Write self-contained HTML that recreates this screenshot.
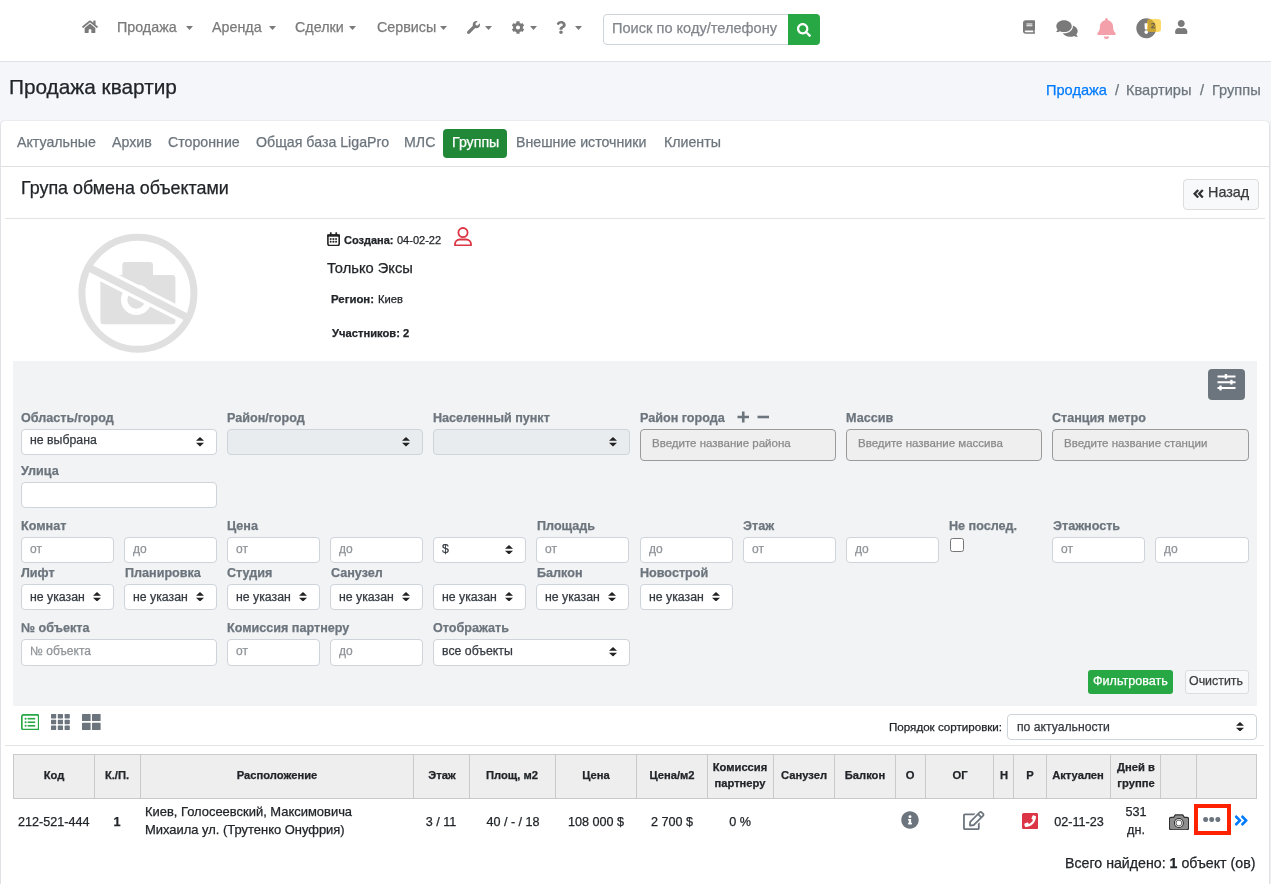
<!DOCTYPE html>
<html><head><meta charset="utf-8"><title>Продажа квартир</title>
<style>
html,body{margin:0;padding:0;}
body{width:1271px;height:884px;overflow:hidden;position:relative;background:#f4f6f9;font-family:"Liberation Sans",sans-serif;color:#212529;}
.t{position:absolute;white-space:nowrap;line-height:1;will-change:transform;-webkit-text-stroke:0.25px currentColor;}
.b{position:absolute;box-sizing:border-box;}
.inp{position:absolute;box-sizing:border-box;background:#fff;border:1px solid #ced4da;border-radius:4px;}
</style></head><body>

<div class="b" style="left:0px;top:0px;width:1271px;height:62px;background:#fff;border-bottom:1px solid #dee2e6;"></div>
<svg class="b" style="left:81.5px;top:20px;" width="16" height="13" viewBox="0 0 576 460"><path fill="#7a7a7a" d="M280.4 148.3L96 300.1V464a16 16 0 0 0 16 16l112.1-.3a16 16 0 0 0 15.9-16V368a16 16 0 0 1 16-16h64a16 16 0 0 1 16 16v95.6a16 16 0 0 0 16 16.1l112 .3a16 16 0 0 0 16-16V300L295.7 148.3a12.2 12.2 0 0 0-15.3 0zM571.6 251.5L488 182.6V44.1a12 12 0 0 0-12-12h-56a12 12 0 0 0-12 12v72.6L318.5 43a48 48 0 0 0-61 0L4.3 251.5a12 12 0 0 0-1.6 16.9l25.5 31A12 12 0 0 0 45.2 301l235.2-193.7a12.2 12.2 0 0 1 15.3 0L530.9 301a12 12 0 0 0 16.9-1.6l25.5-31a12 12 0 0 0-1.7-16.9z" transform="translate(0,-20)"/></svg>
<div class="t " style="left:116.50px;top:19.89px;font-size:14.3px;color:#7a7a7a;">Продажа</div>
<svg class="b" style="left:185.5px;top:26px;" width="7" height="4" viewBox="0 0 7 4"><path d="M0 0H7L3.5 4Z" fill="#7a7a7a"/></svg>
<div class="t " style="left:211.50px;top:19.89px;font-size:14.3px;color:#7a7a7a;">Аренда</div>
<svg class="b" style="left:268.5px;top:26px;" width="7" height="4" viewBox="0 0 7 4"><path d="M0 0H7L3.5 4Z" fill="#7a7a7a"/></svg>
<div class="t " style="left:295.00px;top:19.89px;font-size:14.3px;color:#7a7a7a;">Сделки</div>
<svg class="b" style="left:348.5px;top:26px;" width="7" height="4" viewBox="0 0 7 4"><path d="M0 0H7L3.5 4Z" fill="#7a7a7a"/></svg>
<div class="t " style="left:376.50px;top:19.89px;font-size:14.3px;color:#7a7a7a;">Сервисы</div>
<svg class="b" style="left:439.5px;top:26px;" width="7" height="4" viewBox="0 0 7 4"><path d="M0 0H7L3.5 4Z" fill="#7a7a7a"/></svg>
<svg class="b" style="left:465.5px;top:20.5px;" width="15" height="13" viewBox="0 0 512 512"><path fill="#7a7a7a" d="M507.73 109.1c-2.24-9.03-13.54-12.09-20.12-5.51l-74.36 74.36-67.88-11.31-11.31-67.88 74.36-74.36c6.62-6.62 3.43-17.9-5.66-20.16-47.38-11.74-99.55.91-136.58 37.93-39.64 39.64-50.55 97.1-34.05 147.2L18.74 402.76c-24.99 24.99-24.99 65.51 0 90.5 24.99 24.99 65.51 24.99 90.5 0l213.21-213.21c50.12 16.71 107.47 5.68 147.37-34.22 37.07-37.07 49.7-89.32 37.91-136.73z"/></svg>
<svg class="b" style="left:484.5px;top:26px;" width="7" height="4" viewBox="0 0 7 4"><path d="M0 0H7L3.5 4Z" fill="#7a7a7a"/></svg>
<svg class="b" style="left:510.5px;top:20.5px;" width="14" height="13" viewBox="0 0 512 512"><path fill="#7a7a7a" d="M487.4 315.7l-42.6-24.6c4.3-23.2 4.3-47 0-70.2l42.6-24.6c4.9-2.8 7.1-8.6 5.5-14-11.1-35.6-30-67.8-54.7-94.6-3.8-4.1-10-5.1-14.8-2.3L380.8 110c-17.9-15.4-38.5-27.3-60.8-35.1V25.8c0-5.6-3.9-10.5-9.4-11.7-36.7-8.2-74.3-7.8-109.2 0-5.5 1.2-9.4 6.1-9.4 11.7V75c-22.2 7.9-42.8 19.8-60.8 35.1L88.7 85.5c-4.9-2.8-11-1.9-14.8 2.3-24.7 26.7-43.6 58.9-54.7 94.6-1.7 5.4.6 11.2 5.5 14L67.3 221c-4.3 23.2-4.3 47 0 70.2l-42.6 24.6c-4.9 2.8-7.1 8.6-5.5 14 11.1 35.6 30 67.8 54.7 94.6 3.8 4.1 10 5.1 14.8 2.3l42.6-24.6c17.9 15.4 38.5 27.3 60.8 35.1v49.2c0 5.6 3.9 10.5 9.4 11.7 36.7 8.2 74.3 7.8 109.2 0 5.5-1.2 9.4-6.1 9.4-11.7v-49.2c22.2-7.9 42.8-19.8 60.8-35.1l42.6 24.6c4.9 2.8 11 1.9 14.8-2.3 24.7-26.7 43.6-58.9 54.7-94.6 1.5-5.5-.7-11.3-5.6-14.1zM256 336c-44.1 0-80-35.9-80-80s35.9-80 80-80 80 35.9 80 80-35.9 80-80 80z"/></svg>
<svg class="b" style="left:529.5px;top:26px;" width="7" height="4" viewBox="0 0 7 4"><path d="M0 0H7L3.5 4Z" fill="#7a7a7a"/></svg>
<svg class="b" style="left:556px;top:20.5px;" width="10" height="13" viewBox="0 0 384 512"><path fill="#7a7a7a" d="M202.021 0C122.202 0 70.503 32.703 29.914 91.026c-7.363 10.58-5.093 25.086 5.178 32.874l43.138 32.709c10.373 7.865 25.132 6.026 33.253-4.148 25.049-31.381 43.63-49.449 82.757-49.449 30.764 0 68.816 19.799 68.816 49.631 0 22.552-18.617 34.134-48.993 51.164-35.423 19.86-82.299 44.576-82.299 106.405V320c0 13.255 10.745 24 24 24h72.471c13.255 0 24-10.745 24-24v-5.773c0-42.86 125.268-44.645 125.268-160.627C377.504 66.256 286.902 0 202.021 0zM192 373.459c-38.196 0-69.271 31.075-69.271 69.271 0 38.195 31.075 69.27 69.271 69.27s69.271-31.075 69.271-69.271-31.075-69.27-69.271-69.27z"/></svg>
<svg class="b" style="left:574.5px;top:26px;" width="7" height="4" viewBox="0 0 7 4"><path d="M0 0H7L3.5 4Z" fill="#7a7a7a"/></svg>
<div class="inp" style="left:603px;top:14px;width:186px;height:31px;border-color:#ced4da;border-radius:4px 0 0 4px;"></div>
<div class="t " style="left:612.00px;top:20.94px;font-size:14.6px;color:#80868c;">Поиск по коду/телефону</div>
<div class="b" style="left:788px;top:14px;width:32px;height:31px;background:#28a745;border-radius:0 4px 4px 0;"></div>
<svg class="b" style="left:797px;top:23px;" width="14" height="14" viewBox="0 0 512 512"><path fill="#fff" d="M505 442.7L405.3 343c-4.5-4.5-10.6-7-17-7H372c27.6-35.3 44-79.7 44-128C416 93.1 322.9 0 208 0S0 93.1 0 208s93.1 208 208 208c48.3 0 92.7-16.4 128-44v16.3c0 6.4 2.5 12.5 7 17l99.7 99.7c9.4 9.4 24.6 9.4 33.9 0l28.3-28.3c9.4-9.4 9.4-24.6.1-34zM208 336c-70.7 0-128-57.2-128-128 0-70.7 57.2-128 128-128 70.7 0 128 57.2 128 128 0 70.7-57.2 128-128 128z"/></svg>
<svg class="b" style="left:1023px;top:19.5px;" width="12" height="14" viewBox="0 0 448 512"><path fill="#7a7a7a" d="M448 360V24c0-13.3-10.7-24-24-24H96C43 0 0 43 0 96v320c0 53 43 96 96 96h328c13.3 0 24-10.7 24-24v-16c0-7.5-3.5-14.3-8.9-18.7-4.2-15.4-4.2-59.3 0-74.7 5.4-4.3 8.9-11.1 8.9-18.6zM128 134c0-3.3 2.7-6 6-6h212c3.3 0 6 2.7 6 6v20c0 3.3-2.7 6-6 6H134c-3.3 0-6-2.7-6-6v-20zm0 64c0-3.3 2.7-6 6-6h212c3.3 0 6 2.7 6 6v20c0 3.3-2.7 6-6 6H134c-3.3 0-6-2.7-6-6v-20zm253.4 250H96c-17.7 0-32-14.3-32-32 0-17.6 14.4-32 32-32h285.4c-1.9 17.1-1.9 46.9 0 64z"/></svg>
<svg class="b" style="left:1054.5px;top:18.5px;" width="24" height="19" viewBox="0 0 576 512"><path fill="#7a7a7a" d="M416 192c0-88.4-93.1-160-208-160S0 103.6 0 192c0 34.3 14.1 65.9 38 92-13.4 30.2-35.5 54.2-35.8 54.5-2.2 2.3-2.8 5.7-1.5 8.7S4.8 352 8 352c36.6 0 66.9-12.3 88.7-25 32.2 15.7 70.3 25 111.3 25 114.9 0 208-71.6 208-160zm122 220c23.9-26 38-57.7 38-92 0-66.9-53.5-124.2-129.3-148.1.9 6.6 1.3 13.3 1.3 20.1 0 105.9-107.7 192-240 192-10.8 0-21.3-.8-31.7-1.9C207.8 439.6 281.8 480 368 480c41 0 79.1-9.2 111.3-25 21.8 12.7 52.1 25 88.7 25 3.2 0 6.1-1.9 7.3-4.8 1.3-2.9.7-6.3-1.5-8.7-.3-.3-22.4-24.2-35.8-54.5z"/></svg>
<svg class="b" style="left:1097px;top:17.5px;" width="19" height="21" viewBox="0 0 448 512"><path fill="#f3a0aa" d="M224 512c35.32 0 63.97-28.65 63.97-64H160.03c0 35.35 28.65 64 63.97 64zm215.39-149.71c-19.32-20.76-55.47-51.99-55.47-154.29 0-77.7-54.48-139.9-127.94-155.16V32c0-17.67-14.32-32-31.98-32s-31.98 14.33-31.98 32v20.84C118.56 68.1 64.08 130.3 64.08 208c0 102.3-36.15 133.53-55.47 154.29-6 6.45-8.66 14.16-8.61 21.71.11 16.4 12.98 32 32.1 32h383.8c19.12 0 32-15.6 32.1-32 .05-7.55-2.61-15.27-8.61-21.71z"/></svg>
<svg class="b" style="left:1135.5px;top:18px;" width="20.5" height="20.5" viewBox="0 0 512 512"><path fill="#7a7a7a" d="M504 256c0 136.997-111.043 248-248 248S8 392.997 8 256C8 119.083 119.043 8 256 8s248 111.083 248 248zm-248 50c-25.405 0-46 20.595-46 46s20.595 46 46 46 46-20.595 46-46-20.595-46-46-46zm-43.673-165.346l7.418 136c.347 6.364 5.609 11.346 11.982 11.346h48.546c6.373 0 11.635-4.982 11.982-11.346l7.418-136c.375-6.874-5.098-12.654-11.982-12.654h-63.383c-6.884 0-12.356 5.78-11.981 12.654z"/></svg>
<div class="b" style="left:1147px;top:19px;width:14px;height:13px;background:rgba(255,193,7,.6);border-radius:3px;"></div>
<div class="t " style="left:1151.00px;top:22.15px;font-size:7.5px;color:#555;">2</div>
<svg class="b" style="left:1175px;top:19.5px;" width="12.5" height="14" viewBox="0 0 448 512"><path fill="#7a7a7a" d="M224 256c70.7 0 128-57.3 128-128S294.7 0 224 0 96 57.3 96 128s57.3 128 128 128zm89.6 32h-16.7c-22.2 10.2-46.9 16-72.9 16s-50.6-5.8-72.9-16h-16.7C60.2 288 0 348.2 0 422.4V464c0 26.5 21.5 48 48 48h352c26.5 0 48-21.5 48-48v-41.6c0-74.2-60.2-134.4-134.4-134.4z"/></svg>
<div class="t " style="left:8.50px;top:77.19px;font-size:20.8px;color:#212529;">Продажа квартир</div>
<div class="t " style="left:1046.20px;top:82.84px;font-size:14.6px;color:#007bff;">Продажа</div>
<div class="t " style="left:1115.00px;top:82.84px;font-size:14.6px;color:#6c757d;">/</div>
<div class="t " style="left:1126.40px;top:82.84px;font-size:14.6px;color:#6c757d;">Квартиры</div>
<div class="t " style="left:1200.30px;top:82.84px;font-size:14.6px;color:#6c757d;">/</div>
<div class="t " style="left:1211.80px;top:82.84px;font-size:14.6px;color:#6c757d;">Группы</div>
<div class="b" style="left:1px;top:121px;width:1268px;height:779px;background:#fff;border-radius:4px;box-shadow:0 0 1px rgba(0,0,0,.125),0 1px 3px rgba(0,0,0,.2);"></div>
<div class="t " style="left:16.50px;top:134.58px;font-size:14.2px;color:#6c757d;">Актуальные</div>
<div class="t " style="left:112.00px;top:134.58px;font-size:14.2px;color:#6c757d;">Архив</div>
<div class="t " style="left:168.00px;top:134.58px;font-size:14.2px;color:#6c757d;">Сторонние</div>
<div class="t " style="left:256.00px;top:134.58px;font-size:14.2px;color:#6c757d;">Общая база LigaPro</div>
<div class="t " style="left:404.00px;top:134.58px;font-size:14.2px;color:#6c757d;">МЛС</div>
<div class="b" style="left:443px;top:129px;width:64px;height:29px;background:#218838;border-radius:4px;"></div>
<div class="t " style="left:451.50px;top:134.58px;font-size:14.2px;color:#fff;">Группы</div>
<div class="t " style="left:515.50px;top:134.58px;font-size:14.2px;color:#6c757d;">Внешние источники</div>
<div class="t " style="left:664.00px;top:134.58px;font-size:14.2px;color:#6c757d;">Клиенты</div>
<div class="b" style="left:1px;top:166px;width:1268px;height:1px;background:rgba(0,0,0,.125);"></div>
<div class="t " style="left:20.50px;top:179.64px;font-size:17.9px;color:#212529;">Група обмена объектами</div>
<div class="b" style="left:1183px;top:179px;width:76px;height:31px;background:#f8f9fa;border:1px solid #ddd;border-radius:4px;"></div>
<svg class="b" style="left:1193px;top:188.5px;" width="11" height="9.5" viewBox="0 0 11 9.5"><path d="M5.2 1L1.6 4.75L5.2 8.5M9.8 1L6.2 4.75L9.8 8.5" fill="none" stroke="#333" stroke-width="2.3"/></svg>
<div class="t " style="left:1208.00px;top:185.21px;font-size:14.4px;color:#3a3a3a;">Назад</div>
<div class="b" style="left:5px;top:218px;width:1260px;height:1px;background:#e3e3e3;"></div>
<svg class="b" style="left:76px;top:232px;" width="124" height="124" viewBox="0 0 124 124">
<defs><clipPath id="ic"><circle cx="61.9" cy="61.3" r="52.6"/></clipPath><clipPath id="oc"><circle cx="61.9" cy="61.3" r="59"/></clipPath></defs>
<circle cx="61.9" cy="61.3" r="56" fill="none" stroke="#e0e0e0" stroke-width="7"/>
<path fill="#e0e0e0" d="M49.3 30h24.7a3 3 0 0 1 3 3v10h19.4a3 3 0 0 1 3 3v43.3a3 3 0 0 1-3 3h-69a3 3 0 0 1-3-3V46a3 3 0 0 1 3-3h18.9V33a3 3 0 0 1 3-3z"/>
<circle cx="60.3" cy="67.7" r="15.3" fill="#fff"/>
<circle cx="60.3" cy="67.7" r="9" fill="#e0e0e0"/>
<path d="M8.4 33.3L115.4 87.7" stroke="#fff" stroke-width="14" clip-path="url(#ic)"/>
<path d="M8.4 33.3L115.4 87.7" stroke="#e0e0e0" stroke-width="7.6" clip-path="url(#oc)"/>
</svg>
<svg class="b" style="left:327px;top:231.5px;" width="13" height="14.5" viewBox="0 0 13 14.5"><rect x="0.9" y="3" width="11.3" height="10.6" rx="1.8" fill="none" stroke="#222" stroke-width="1.6"/><rect x="0.2" y="2.3" width="12.7" height="2.4" fill="#222"/><rect x="2.9" y="0.3" width="1.7" height="3" fill="#222"/><rect x="8.4" y="0.3" width="1.7" height="3" fill="#222"/><g fill="#222"><rect x="2.8" y="6.2" width="1.6" height="1.6"/><rect x="5.6" y="6.2" width="1.6" height="1.6"/><rect x="8.3" y="6.2" width="1.6" height="1.6"/><rect x="2.8" y="9" width="1.6" height="1.6"/><rect x="5.6" y="9" width="1.6" height="1.6"/><rect x="8.3" y="9" width="1.6" height="1.6"/></g><path d="M3.6 7v2.8M6.4 7v2.8M9.1 7v2.8M3.6 7h5.5M3.6 9.8h5.5" stroke="#222" stroke-width="0.6" opacity=".5"/></svg>
<div class="t " style="left:343.50px;top:234.69px;font-size:11px;font-weight:700;color:#212529;">Создана:</div>
<div class="t " style="left:397.00px;top:234.69px;font-size:11px;color:#212529;">04-02-22</div>
<svg class="b" style="left:454px;top:226.5px;" width="18" height="19.5" viewBox="0 0 18 19.5"><circle cx="9" cy="5.6" r="4.6" fill="none" stroke="#dc3545" stroke-width="1.8"/><path d="M1 18.5v-1.3c0-2.6 2.1-4.7 4.7-4.7h6.6c2.6 0 4.7 2.1 4.7 4.7v1.3z" fill="none" stroke="#dc3545" stroke-width="1.8" stroke-linejoin="round"/></svg>
<div class="t " style="left:327.30px;top:260.55px;font-size:14.7px;color:#212529;">Только Эксы</div>
<div class="t " style="left:331.30px;top:294.25px;font-size:11.4px;font-weight:700;color:#212529;">Регион:</div>
<div class="t " style="left:377.60px;top:294.42px;font-size:11.2px;color:#212529;">Киев</div>
<div class="t " style="left:331.60px;top:327.52px;font-size:11.2px;font-weight:700;color:#212529;">Участников: 2</div>
<div class="b" style="left:13px;top:361px;width:1244px;height:345px;background:#f2f3f5;"></div>
<div class="b" style="left:1208px;top:369px;width:37px;height:31px;background:#6c757d;border-radius:4px;"></div>
<svg class="b" style="left:1216.5px;top:374px;" width="19" height="16.5" viewBox="0 0 19 16.5"><g stroke="#fff" stroke-width="2"><path d="M0.5 2.4H18.5M0.5 8.2H18.5M0.5 14H18.5"/></g><g fill="#fff"><rect x="7.7" y="0" width="2.4" height="4.8" rx=".6"/><rect x="13.2" y="5.8" width="2.4" height="4.8" rx=".6"/><rect x="2.3" y="11.6" width="2.4" height="4.8" rx=".6"/></g></svg>
<div class="t " style="left:20.80px;top:412.03px;font-size:12.6px;font-weight:700;color:#6c757d;">Область/город</div>
<div class="t " style="left:227.30px;top:412.03px;font-size:12.6px;font-weight:700;color:#6c757d;">Район/город</div>
<div class="t " style="left:433.30px;top:412.03px;font-size:12.6px;font-weight:700;color:#6c757d;">Населенный пункт</div>
<div class="t " style="left:640.00px;top:412.03px;font-size:12.6px;font-weight:700;color:#6c757d;">Район города</div>
<div class="t " style="left:846.00px;top:412.03px;font-size:12.6px;font-weight:700;color:#6c757d;">Массив</div>
<div class="t " style="left:1052.40px;top:412.03px;font-size:12.6px;font-weight:700;color:#6c757d;">Станция метро</div>
<svg class="b" style="left:737px;top:411px;" width="12.5" height="12" viewBox="0 0 12.5 12"><path d="M6.25 0.5V11.5M0.5 6H12" stroke="#6c757d" stroke-width="2.6"/></svg>
<svg class="b" style="left:757px;top:411px;" width="12.5" height="12" viewBox="0 0 12.5 12"><path d="M0.5 6H12" stroke="#6c757d" stroke-width="2.6"/></svg>
<div class="inp" style="left:21px;top:429px;width:196px;height:26px;background:#fff;"></div>
<div class="t " style="left:29.70px;top:434.29px;font-size:12.3px;color:#343a40;">не выбрана</div>
<svg class="b" style="left:196px;top:437.2px;" width="8" height="9.5" viewBox="0 0 8 9.5"><path d="M4 0L8 3.8H0Z M0 5.7H8L4 9.5Z" fill="#222"/></svg>
<div class="inp" style="left:227px;top:429px;width:195.5px;height:26px;background:#e9ecef;"></div>
<svg class="b" style="left:401.5px;top:437.2px;" width="8" height="9.5" viewBox="0 0 8 9.5"><path d="M4 0L8 3.8H0Z M0 5.7H8L4 9.5Z" fill="#222"/></svg>
<div class="inp" style="left:433px;top:429px;width:196.5px;height:26px;background:#e9ecef;"></div>
<svg class="b" style="left:608.5px;top:437.2px;" width="8" height="9.5" viewBox="0 0 8 9.5"><path d="M4 0L8 3.8H0Z M0 5.7H8L4 9.5Z" fill="#222"/></svg>
<div class="inp" style="left:640px;top:429px;width:196px;height:31.5px;background:#efefef;border-color:#9a9a9a;border-radius:4px;"></div>
<div class="t " style="left:651.50px;top:437.96px;font-size:11.5px;color:#8a8a8a;">Введите название района</div>
<div class="inp" style="left:846px;top:429px;width:196px;height:31.5px;background:#efefef;border-color:#9a9a9a;border-radius:4px;"></div>
<div class="t " style="left:857.50px;top:437.96px;font-size:11.5px;color:#8a8a8a;">Введите название массива</div>
<div class="inp" style="left:1052px;top:429px;width:196.5px;height:31.5px;background:#efefef;border-color:#9a9a9a;border-radius:4px;"></div>
<div class="t " style="left:1063.50px;top:437.96px;font-size:11.5px;color:#8a8a8a;">Введите название станции</div>
<div class="t " style="left:20.80px;top:464.73px;font-size:12.6px;font-weight:700;color:#6c757d;">Улица</div>
<div class="inp" style="left:21px;top:482px;width:196px;height:26px;background:#fff;border-color:#ced4da;"></div>
<div class="t " style="left:21.00px;top:520.13px;font-size:12.6px;font-weight:700;color:#6c757d;">Комнат</div>
<div class="t " style="left:227.30px;top:520.13px;font-size:12.6px;font-weight:700;color:#6c757d;">Цена</div>
<div class="t " style="left:536.50px;top:520.13px;font-size:12.6px;font-weight:700;color:#6c757d;">Площадь</div>
<div class="t " style="left:742.80px;top:520.13px;font-size:12.6px;font-weight:700;color:#6c757d;">Этаж</div>
<div class="t " style="left:949.30px;top:520.13px;font-size:12.6px;font-weight:700;color:#6c757d;">Не послед.</div>
<div class="t " style="left:1052.70px;top:520.13px;font-size:12.6px;font-weight:700;color:#6c757d;">Этажность</div>
<div class="inp" style="left:21px;top:537px;width:93px;height:25.5px;background:#fff;border-color:#ced4da;"></div>
<div class="t " style="left:29.50px;top:543.04px;font-size:12px;color:#8e9398;">от</div>
<div class="inp" style="left:124px;top:537px;width:93px;height:25.5px;background:#fff;border-color:#ced4da;"></div>
<div class="t " style="left:132.50px;top:543.04px;font-size:12px;color:#8e9398;">до</div>
<div class="inp" style="left:227px;top:537px;width:93px;height:25.5px;background:#fff;border-color:#ced4da;"></div>
<div class="t " style="left:235.50px;top:543.04px;font-size:12px;color:#8e9398;">от</div>
<div class="inp" style="left:330px;top:537px;width:93px;height:25.5px;background:#fff;border-color:#ced4da;"></div>
<div class="t " style="left:338.50px;top:543.04px;font-size:12px;color:#8e9398;">до</div>
<div class="inp" style="left:433px;top:537px;width:93px;height:25.5px;background:#fff;"></div>
<div class="t " style="left:441.70px;top:542.79px;font-size:12.3px;color:#343a40;">$</div>
<svg class="b" style="left:505px;top:544.95px;" width="8" height="9.5" viewBox="0 0 8 9.5"><path d="M4 0L8 3.8H0Z M0 5.7H8L4 9.5Z" fill="#222"/></svg>
<div class="inp" style="left:536px;top:537px;width:93px;height:25.5px;background:#fff;border-color:#ced4da;"></div>
<div class="t " style="left:544.50px;top:543.04px;font-size:12px;color:#8e9398;">от</div>
<div class="inp" style="left:640px;top:537px;width:93px;height:25.5px;background:#fff;border-color:#ced4da;"></div>
<div class="t " style="left:648.50px;top:543.04px;font-size:12px;color:#8e9398;">до</div>
<div class="inp" style="left:743px;top:537px;width:93px;height:25.5px;background:#fff;border-color:#ced4da;"></div>
<div class="t " style="left:751.50px;top:543.04px;font-size:12px;color:#8e9398;">от</div>
<div class="inp" style="left:846px;top:537px;width:93px;height:25.5px;background:#fff;border-color:#ced4da;"></div>
<div class="t " style="left:854.50px;top:543.04px;font-size:12px;color:#8e9398;">до</div>
<div class="inp" style="left:1052px;top:537px;width:93px;height:25.5px;background:#fff;border-color:#ced4da;"></div>
<div class="t " style="left:1060.50px;top:543.04px;font-size:12px;color:#8e9398;">от</div>
<div class="inp" style="left:1155px;top:537px;width:93.5px;height:25.5px;background:#fff;border-color:#ced4da;"></div>
<div class="t " style="left:1163.50px;top:543.04px;font-size:12px;color:#8e9398;">до</div>
<div class="b" style="left:950px;top:538px;width:14px;height:14px;border:1px solid #767676;border-radius:2.5px;background:#fff;"></div>
<div class="t " style="left:21.00px;top:566.83px;font-size:12.6px;font-weight:700;color:#6c757d;">Лифт</div>
<div class="t " style="left:124.50px;top:566.83px;font-size:12.6px;font-weight:700;color:#6c757d;">Планировка</div>
<div class="t " style="left:227.30px;top:566.83px;font-size:12.6px;font-weight:700;color:#6c757d;">Студия</div>
<div class="t " style="left:330.50px;top:566.83px;font-size:12.6px;font-weight:700;color:#6c757d;">Санузел</div>
<div class="t " style="left:536.50px;top:566.83px;font-size:12.6px;font-weight:700;color:#6c757d;">Балкон</div>
<div class="t " style="left:640.00px;top:566.83px;font-size:12.6px;font-weight:700;color:#6c757d;">Новострой</div>
<div class="inp" style="left:21px;top:584px;width:93px;height:25.5px;background:#fff;"></div>
<div class="t " style="left:29.70px;top:591.19px;font-size:12.3px;color:#343a40;">не указан</div>
<svg class="b" style="left:93px;top:591.95px;" width="8" height="9.5" viewBox="0 0 8 9.5"><path d="M4 0L8 3.8H0Z M0 5.7H8L4 9.5Z" fill="#222"/></svg>
<div class="inp" style="left:124px;top:584px;width:93px;height:25.5px;background:#fff;"></div>
<div class="t " style="left:132.70px;top:591.19px;font-size:12.3px;color:#343a40;">не указан</div>
<svg class="b" style="left:196px;top:591.95px;" width="8" height="9.5" viewBox="0 0 8 9.5"><path d="M4 0L8 3.8H0Z M0 5.7H8L4 9.5Z" fill="#222"/></svg>
<div class="inp" style="left:227px;top:584px;width:93px;height:25.5px;background:#fff;"></div>
<div class="t " style="left:235.70px;top:591.19px;font-size:12.3px;color:#343a40;">не указан</div>
<svg class="b" style="left:299px;top:591.95px;" width="8" height="9.5" viewBox="0 0 8 9.5"><path d="M4 0L8 3.8H0Z M0 5.7H8L4 9.5Z" fill="#222"/></svg>
<div class="inp" style="left:330px;top:584px;width:93px;height:25.5px;background:#fff;"></div>
<div class="t " style="left:338.70px;top:591.19px;font-size:12.3px;color:#343a40;">не указан</div>
<svg class="b" style="left:402px;top:591.95px;" width="8" height="9.5" viewBox="0 0 8 9.5"><path d="M4 0L8 3.8H0Z M0 5.7H8L4 9.5Z" fill="#222"/></svg>
<div class="inp" style="left:433px;top:584px;width:93px;height:25.5px;background:#fff;"></div>
<div class="t " style="left:441.70px;top:591.19px;font-size:12.3px;color:#343a40;">не указан</div>
<svg class="b" style="left:505px;top:591.95px;" width="8" height="9.5" viewBox="0 0 8 9.5"><path d="M4 0L8 3.8H0Z M0 5.7H8L4 9.5Z" fill="#222"/></svg>
<div class="inp" style="left:536px;top:584px;width:93px;height:25.5px;background:#fff;"></div>
<div class="t " style="left:544.70px;top:591.19px;font-size:12.3px;color:#343a40;">не указан</div>
<svg class="b" style="left:608px;top:591.95px;" width="8" height="9.5" viewBox="0 0 8 9.5"><path d="M4 0L8 3.8H0Z M0 5.7H8L4 9.5Z" fill="#222"/></svg>
<div class="inp" style="left:640px;top:584px;width:93px;height:25.5px;background:#fff;"></div>
<div class="t " style="left:648.70px;top:591.19px;font-size:12.3px;color:#343a40;">не указан</div>
<svg class="b" style="left:712px;top:591.95px;" width="8" height="9.5" viewBox="0 0 8 9.5"><path d="M4 0L8 3.8H0Z M0 5.7H8L4 9.5Z" fill="#222"/></svg>
<div class="t " style="left:21.00px;top:621.73px;font-size:12.6px;font-weight:700;color:#6c757d;">№ объекта</div>
<div class="t " style="left:227.30px;top:621.73px;font-size:12.6px;font-weight:700;color:#6c757d;">Комиссия партнеру</div>
<div class="t " style="left:433.30px;top:621.73px;font-size:12.6px;font-weight:700;color:#6c757d;">Отображать</div>
<div class="inp" style="left:21px;top:639px;width:196px;height:26.5px;background:#fff;border-color:#ced4da;"></div>
<div class="t " style="left:29.50px;top:645.04px;font-size:12px;color:#8e9398;">№ объекта</div>
<div class="inp" style="left:227px;top:639px;width:92.5px;height:26.5px;background:#fff;border-color:#ced4da;"></div>
<div class="t " style="left:235.50px;top:645.04px;font-size:12px;color:#8e9398;">от</div>
<div class="inp" style="left:330px;top:639px;width:93px;height:26.5px;background:#fff;border-color:#ced4da;"></div>
<div class="t " style="left:338.50px;top:645.04px;font-size:12px;color:#8e9398;">до</div>
<div class="inp" style="left:433px;top:639px;width:196.5px;height:26.5px;background:#fff;"></div>
<div class="t " style="left:441.70px;top:645.39px;font-size:12.3px;color:#343a40;">все объекты</div>
<svg class="b" style="left:608.5px;top:647.45px;" width="8" height="9.5" viewBox="0 0 8 9.5"><path d="M4 0L8 3.8H0Z M0 5.7H8L4 9.5Z" fill="#222"/></svg>
<div class="b" style="left:1088px;top:670px;width:85px;height:24px;background:#28a745;border-radius:3px;"></div>
<div class="t " style="left:1092.50px;top:674.53px;font-size:12.6px;color:#fff;">Фильтровать</div>
<div class="b" style="left:1185px;top:670px;width:64px;height:24px;background:#f8f9fa;border:1px solid #ddd;border-radius:3px;"></div>
<div class="t " style="left:1189.30px;top:674.70px;font-size:12.4px;color:#3d3d3d;">Очистить</div>
<svg class="b" style="left:20.5px;top:713.8px;" width="18.5" height="16.5" viewBox="0 0 18.5 16.5"><rect x="0.8" y="0.8" width="16.9" height="14.9" rx="1.8" fill="none" stroke="#28a745" stroke-width="1.7"/><g fill="#28a745"><circle cx="4.6" cy="4.7" r="1.05"/><circle cx="4.6" cy="8.25" r="1.05"/><circle cx="4.6" cy="11.8" r="1.05"/><rect x="6.6" y="3.9" width="7.6" height="1.6"/><rect x="6.6" y="7.45" width="7.6" height="1.6"/><rect x="6.6" y="11" width="7.6" height="1.6"/></g></svg>
<svg class="b" style="left:51px;top:714px;" width="19" height="16" viewBox="0 0 19 16"><g fill="#6c757d"><rect x="0" y="0" width="5.2" height="4.4" rx=".6"/><rect x="0" y="5.8" width="5.2" height="4.4" rx=".6"/><rect x="0" y="11.6" width="5.2" height="4.4" rx=".6"/><rect x="6.8" y="0" width="5.2" height="4.4" rx=".6"/><rect x="6.8" y="5.8" width="5.2" height="4.4" rx=".6"/><rect x="6.8" y="11.6" width="5.2" height="4.4" rx=".6"/><rect x="13.6" y="0" width="5.2" height="4.4" rx=".6"/><rect x="13.6" y="5.8" width="5.2" height="4.4" rx=".6"/><rect x="13.6" y="11.6" width="5.2" height="4.4" rx=".6"/></g></svg>
<svg class="b" style="left:81.5px;top:714px;" width="19" height="16" viewBox="0 0 19 16"><g fill="#6c757d"><rect x="0" y="0" width="8.6" height="7" rx=".6"/><rect x="10" y="0" width="8.6" height="7" rx=".6"/><rect x="0" y="8.8" width="8.6" height="7.2" rx=".6"/><rect x="10" y="8.8" width="8.6" height="7.2" rx=".6"/></g></svg>
<div class="t " style="left:889.00px;top:721.18px;font-size:11.6px;color:#212529;">Порядок сортировки:</div>
<div class="inp" style="left:1007px;top:714px;width:250px;height:25.5px;background:#fff;"></div>
<div class="t " style="left:1016.50px;top:720.67px;font-size:12.2px;color:#343a40;">по актуальности</div>
<svg class="b" style="left:1236px;top:721.95px;" width="8" height="9.5" viewBox="0 0 8 9.5"><path d="M4 0L8 3.8H0Z M0 5.7H8L4 9.5Z" fill="#222"/></svg>
<div class="b" style="left:5px;top:745px;width:1259px;height:1px;background:#e3e3e3;"></div>
<div class="b" style="left:13px;top:754px;width:1244px;height:45px;background:#eeeeee;border:1px solid #cacaca;"></div>
<div class="b" style="left:94px;top:754px;width:1px;height:45px;background:#cacaca;"></div>
<div class="b" style="left:140px;top:754px;width:1px;height:45px;background:#cacaca;"></div>
<div class="b" style="left:413px;top:754px;width:1px;height:45px;background:#cacaca;"></div>
<div class="b" style="left:469px;top:754px;width:1px;height:45px;background:#cacaca;"></div>
<div class="b" style="left:555px;top:754px;width:1px;height:45px;background:#cacaca;"></div>
<div class="b" style="left:636px;top:754px;width:1px;height:45px;background:#cacaca;"></div>
<div class="b" style="left:707px;top:754px;width:1px;height:45px;background:#cacaca;"></div>
<div class="b" style="left:773px;top:754px;width:1px;height:45px;background:#cacaca;"></div>
<div class="b" style="left:834px;top:754px;width:1px;height:45px;background:#cacaca;"></div>
<div class="b" style="left:895px;top:754px;width:1px;height:45px;background:#cacaca;"></div>
<div class="b" style="left:925px;top:754px;width:1px;height:45px;background:#cacaca;"></div>
<div class="b" style="left:993px;top:754px;width:1px;height:45px;background:#cacaca;"></div>
<div class="b" style="left:1013px;top:754px;width:1px;height:45px;background:#cacaca;"></div>
<div class="b" style="left:1046px;top:754px;width:1px;height:45px;background:#cacaca;"></div>
<div class="b" style="left:1110px;top:754px;width:1px;height:45px;background:#cacaca;"></div>
<div class="b" style="left:1160px;top:754px;width:1px;height:45px;background:#cacaca;"></div>
<div class="b" style="left:1196px;top:754px;width:1px;height:45px;background:#cacaca;"></div>
<div class="t" style="left:-146.05px;width:400px;text-align:center;top:769.72px;font-size:11.2px;font-weight:700;color:#212529;">Код</div>
<div class="t" style="left:-82.60px;width:400px;text-align:center;top:769.72px;font-size:11.2px;font-weight:700;color:#212529;">К./П.</div>
<div class="t" style="left:77.05px;width:400px;text-align:center;top:769.72px;font-size:11.2px;font-weight:700;color:#212529;">Расположение</div>
<div class="t" style="left:241.60px;width:400px;text-align:center;top:769.72px;font-size:11.2px;font-weight:700;color:#212529;">Этаж</div>
<div class="t" style="left:312.30px;width:400px;text-align:center;top:769.72px;font-size:11.2px;font-weight:700;color:#212529;">Площ, м2</div>
<div class="t" style="left:395.75px;width:400px;text-align:center;top:769.72px;font-size:11.2px;font-weight:700;color:#212529;">Цена</div>
<div class="t" style="left:471.80px;width:400px;text-align:center;top:769.72px;font-size:11.2px;font-weight:700;color:#212529;">Цена/м2</div>
<div class="t" style="left:603.85px;width:400px;text-align:center;top:769.72px;font-size:11.2px;font-weight:700;color:#212529;">Санузел</div>
<div class="t" style="left:664.80px;width:400px;text-align:center;top:769.72px;font-size:11.2px;font-weight:700;color:#212529;">Балкон</div>
<div class="t" style="left:710.30px;width:400px;text-align:center;top:769.72px;font-size:11.2px;font-weight:700;color:#212529;">О</div>
<div class="t" style="left:759.60px;width:400px;text-align:center;top:769.72px;font-size:11.2px;font-weight:700;color:#212529;">ОГ</div>
<div class="t" style="left:803.85px;width:400px;text-align:center;top:769.72px;font-size:11.2px;font-weight:700;color:#212529;">Н</div>
<div class="t" style="left:830.20px;width:400px;text-align:center;top:769.72px;font-size:11.2px;font-weight:700;color:#212529;">Р</div>
<div class="t" style="left:878.45px;width:400px;text-align:center;top:769.72px;font-size:11.2px;font-weight:700;color:#212529;">Актуален</div>
<div class="t" style="left:540.25px;width:400px;text-align:center;top:761.52px;font-size:11.2px;font-weight:700;color:#212529;">Комиссия</div>
<div class="t" style="left:540.25px;width:400px;text-align:center;top:777.92px;font-size:11.2px;font-weight:700;color:#212529;">партнеру</div>
<div class="t" style="left:935.55px;width:400px;text-align:center;top:761.52px;font-size:11.2px;font-weight:700;color:#212529;">Дней в</div>
<div class="t" style="left:935.55px;width:400px;text-align:center;top:777.92px;font-size:11.2px;font-weight:700;color:#212529;">группе</div>
<div class="t " style="left:17.50px;top:815.83px;font-size:12.6px;color:#212529;">212-521-444</div>
<div class="t" style="left:-82.60px;width:400px;text-align:center;top:815.83px;font-size:12.6px;font-weight:700;color:#212529;">1</div>
<div class="t " style="left:144.80px;top:805.54px;font-size:12.95px;color:#212529;">Киев, Голосеевский, Максимовича</div>
<div class="t " style="left:144.80px;top:824.44px;font-size:12.95px;color:#212529;">Михаила ул. (Трутенко Онуфрия)</div>
<div class="t" style="left:241.20px;width:400px;text-align:center;top:815.83px;font-size:12.6px;color:#212529;">3 / 11</div>
<div class="t" style="left:312.80px;width:400px;text-align:center;top:815.83px;font-size:12.6px;color:#212529;">40 / - / 18</div>
<div class="t" style="left:396.00px;width:400px;text-align:center;top:815.83px;font-size:12.6px;color:#212529;">108 000 $</div>
<div class="t" style="left:472.00px;width:400px;text-align:center;top:815.83px;font-size:12.6px;color:#212529;">2 700 $</div>
<div class="t" style="left:540.30px;width:400px;text-align:center;top:815.83px;font-size:12.6px;color:#212529;">0 %</div>
<svg class="b" style="left:901.3px;top:811px;" width="18" height="18" viewBox="0 0 512 512"><path fill="#6c757d" d="M256 8C119.043 8 8 119.083 8 256c0 136.997 111.043 248 248 248s248-111.003 248-248C504 119.083 392.957 8 256 8zm0 110c23.196 0 42 18.804 42 42s-18.804 42-42 42-42-18.804-42-42 18.804-42 42-42zm56 254c0 6.627-5.373 12-12 12h-88c-6.627 0-12-5.373-12-12v-24c0-6.627 5.373-12 12-12h12v-64h-12c-6.627 0-12-5.373-12-12v-24c0-6.627 5.373-12 12-12h64c6.627 0 12 5.373 12 12v100h12c6.627 0 12 5.373 12 12v24z"/></svg>
<svg class="b" style="left:963px;top:810.5px;" width="21.5" height="19" viewBox="0 0 576 512"><path fill="#6c757d" d="M402.3 344.9l32-32c5-5 13.7-1.5 13.7 5.7V464c0 26.5-21.5 48-48 48H48c-26.5 0-48-21.5-48-48V112c0-26.5 21.5-48 48-48h273.5c7.1 0 10.7 8.6 5.7 13.7l-32 32c-1.5 1.5-3.5 2.3-5.7 2.3H48v352h352V350.5c0-2.1.8-4.1 2.3-5.6zm156.6-201.8L296.3 405.7l-90.4 10c-26.2 2.9-48.5-19.2-45.6-45.6l10-90.4L432.9 17.1c22.9-22.9 59.9-22.9 82.7 0l43.2 43.2c22.9 22.9 22.9 60 .1 82.8zM460.1 174L402 115.9 216.2 301.8l-7.3 65.3 65.3-7.3L460.1 174zm64.8-79.7l-43.2-43.2c-4.1-4.1-10.8-4.1-14.8 0L436 82l58.1 58.1 30.9-30.9c4-4.2 4-10.8-.1-14.9z"/></svg>
<svg class="b" style="left:1022px;top:813px;" width="16.3" height="16.3" viewBox="0 32 448 448"><path fill="#dc3545" d="M400 32H48C21.49 32 0 53.49 0 80v352c0 26.51 21.49 48 48 48h352c26.51 0 48-21.49 48-48V80c0-26.51-21.49-48-48-48z"/><path fill="#fff" d="M94 416c-7.033 0-13.057-4.873-14.616-11.627l-14.998-65a15 15 0 0 1 8.707-17.16l69.998-29.999a15 15 0 0 1 17.518 4.289l30.997 37.885c48.937-22.954 88.34-62.876 110.967-110.967l-37.885-30.997a15 15 0 0 1-4.289-17.518l29.999-69.998a15 15 0 0 1 17.16-8.707l65 14.998A14.997 14.997 0 0 1 384 126c0 160.292-129.945 290-290 290z"/></svg>
<div class="t" style="left:878.50px;width:400px;text-align:center;top:815.83px;font-size:12.6px;color:#212529;">02-11-23</div>
<div class="t" style="left:935.50px;width:400px;text-align:center;top:805.63px;font-size:12.6px;color:#212529;">531</div>
<div class="t" style="left:935.50px;width:400px;text-align:center;top:824.33px;font-size:12.6px;color:#212529;">дн.</div>
<svg class="b" style="left:1169px;top:813.5px;" width="20" height="16.5" viewBox="0 0 20 16.5"><path d="M6.3 0.9h7.4l1.6 2.4h2.5a1.8 1.8 0 0 1 1.8 1.8v8.9a1.8 1.8 0 0 1-1.8 1.8H2.2a1.8 1.8 0 0 1-1.8-1.8V5.1a1.8 1.8 0 0 1 1.8-1.8h2.5z" fill="#8e8e8e" stroke="#2e2e2e" stroke-width="1.2" stroke-linejoin="round"/><circle cx="9.9" cy="9" r="4.9" fill="#2e2e2e"/><circle cx="9.9" cy="9" r="3.9" fill="#f4f4f4"/><circle cx="9.9" cy="9" r="2.9" fill="none" stroke="#444" stroke-width=".8"/><circle cx="9.9" cy="9" r="2.1" fill="#fff"/></svg>
<div class="b" style="left:1193.5px;top:803.5px;width:37.799999999999955px;height:31.5px;border:4.7px solid #ff2200;"></div>
<svg class="b" style="left:1202.8px;top:817.2px;" width="18" height="5.2" viewBox="0 0 18 5.2"><g fill="#6c757d"><circle cx="2.6" cy="2.55" r="2.5"/><circle cx="8.7" cy="2.55" r="2.5"/><circle cx="14.9" cy="2.55" r="2.5"/></g></svg>
<svg class="b" style="left:1234px;top:814.5px;" width="14.5" height="11" viewBox="0 0 448 340"><path fill="#007bff" d="M224.3 187l-136 136c-9.4 9.4-24.6 9.4-33.9 0l-22.6-22.6c-9.4-9.4-9.4-24.6 0-33.9l96.4-96.4-96.4-96.4c-9.4-9.4-9.4-24.6 0-33.9L54.3 17c9.4-9.4 24.6-9.4 33.9 0l136 136c9.5 9.4 9.5 24.6.1 34zm192-34l-136-136c-9.4-9.4-24.6-9.4-33.9 0l-22.6 22.6c-9.4 9.4-9.4 24.6 0 33.9l96.4 96.4-96.4 96.4c-9.4 9.4-9.4 24.6 0 33.9l22.6 22.6c9.4 9.4 24.6 9.4 33.9 0l136-136c9.4-9.2 9.4-24.4 0-33.8z"/></svg>
<div class="t" style="right:15.5px;top:855.68px;font-size:14.2px;color:#212529;">Всего найдено: <b>1</b> объект (ов)</div>
</body></html>
